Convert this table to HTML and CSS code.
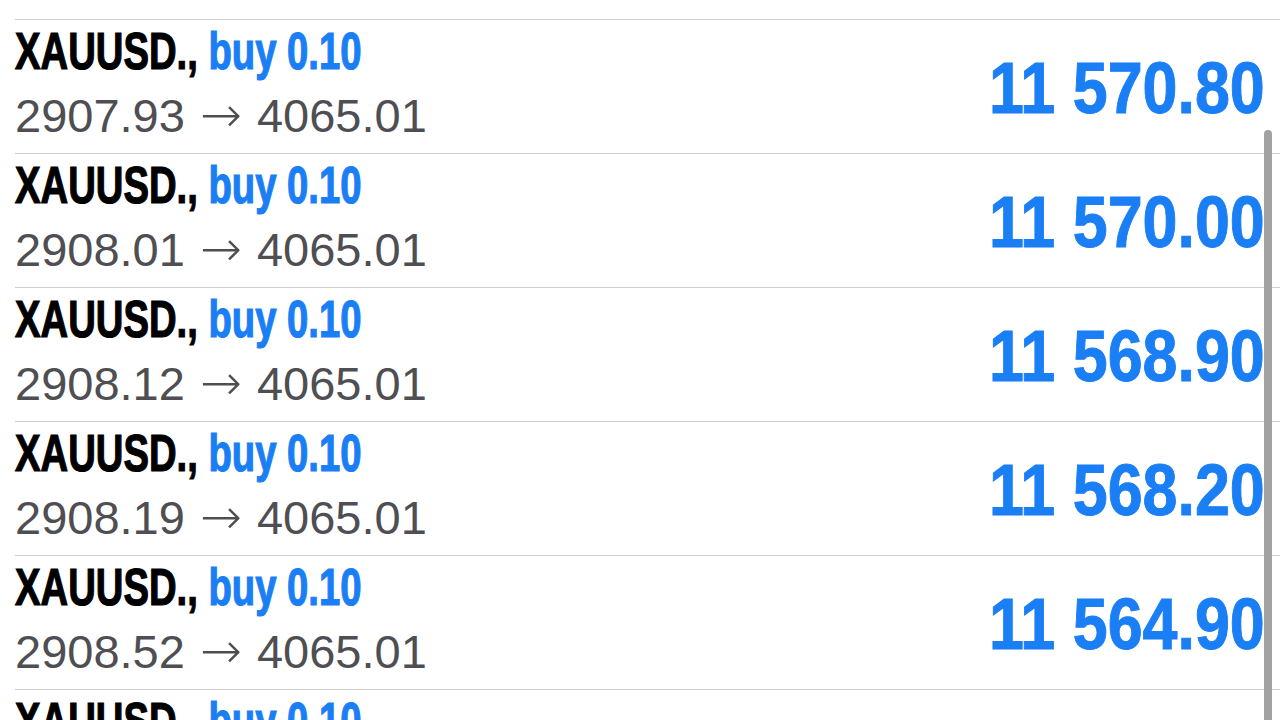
FILE: index.html
```html
<!DOCTYPE html>
<html lang="en">
<head>
    <meta charset="UTF-8">
    <meta name="viewport" content="width=device-width, initial-scale=1.0">
    <title>Trade History</title>
    <link rel="stylesheet" href="styles.css">
</head>
<body>

    <div class="deals">
        <div class="deal">
            <div class="deal-info">
                <div class="deal-title">XAUUSD., <span class="deal-type">buy 0.10</span></div>
                <div class="deal-prices">2907.84 <span class="arrow">→</span> 4065.01</div>
            </div>
            <div class="deal-profit">11 571.70</div>
        </div>
        <div class="deal">
            <div class="deal-info">
                <div class="deal-title">XAUUSD., <span class="deal-type">buy 0.10</span></div>
                <div class="deal-prices">2907.93 <span class="arrow">→</span> 4065.01</div>
            </div>
            <div class="deal-profit">11 570.80</div>
        </div>
        <div class="deal">
            <div class="deal-info">
                <div class="deal-title">XAUUSD., <span class="deal-type">buy 0.10</span></div>
                <div class="deal-prices">2908.01 <span class="arrow">→</span> 4065.01</div>
            </div>
            <div class="deal-profit">11 570.00</div>
        </div>
        <div class="deal">
            <div class="deal-info">
                <div class="deal-title">XAUUSD., <span class="deal-type">buy 0.10</span></div>
                <div class="deal-prices">2908.12 <span class="arrow">→</span> 4065.01</div>
            </div>
            <div class="deal-profit">11 568.90</div>
        </div>
        <div class="deal">
            <div class="deal-info">
                <div class="deal-title">XAUUSD., <span class="deal-type">buy 0.10</span></div>
                <div class="deal-prices">2908.19 <span class="arrow">→</span> 4065.01</div>
            </div>
            <div class="deal-profit">11 568.20</div>
        </div>
        <div class="deal">
            <div class="deal-info">
                <div class="deal-title">XAUUSD., <span class="deal-type">buy 0.10</span></div>
                <div class="deal-prices">2908.52 <span class="arrow">→</span> 4065.01</div>
            </div>
            <div class="deal-profit">11 564.90</div>
        </div>
        <div class="deal">
            <div class="deal-info">
                <div class="deal-title">XAUUSD., <span class="deal-type">buy 0.10</span></div>
                <div class="deal-prices">2908.60 <span class="arrow">→</span> 4065.01</div>
            </div>
            <div class="deal-profit">11 564.10</div>
        </div>
    </div>

    <div class="scrollbar"></div>

</body>
</html>
```

FILE: styles.css
```css
html, body {
    height: 100%;
    overflow: hidden;
}

body {
    font-family: 'Liberation Sans', Arial, sans-serif;
    margin: 0;
    background-color: #fff;
    color: #000;
}

.deals {
    margin-top: -114px;
    padding-left: 15px;
}

.deal {
    display: flex;
    justify-content: space-between;
    align-items: flex-start;
    height: 133px;
    padding-right: 15px;
    border-bottom: 1px solid #d0d0d0;
}

.deal-info {
    padding-top: 1px;
}

/* the app uses a condensed bold face, so squeeze Liberation Sans */
.deal-title {
    display: inline-block;
    font-weight: bold;
    font-size: 51px;
    line-height: 62px;
    white-space: nowrap;
    -webkit-text-stroke: 1.2px currentColor;
    transform: scaleX(0.75);
    transform-origin: left center;
}

.deal-type {
    color: #1a7ef5;
}

.deal-prices {
    font-size: 47px;
    line-height: 64px;
    color: #4e4e53;
    white-space: nowrap;
}

.arrow {
    font-family: 'DejaVu Sans', sans-serif;
    font-weight: 200;
    font-size: 50px;
    margin: 0 2px;
}

.deal-profit {
    display: inline-block;
    font-weight: bold;
    font-size: 73px;
    line-height: 80px;
    margin-top: 28px;
    color: #1a7ef5;
    white-space: nowrap;
    -webkit-text-stroke: 1px currentColor;
    transform: scaleX(0.86);
    transform-origin: right center;
}

.scrollbar {
    position: fixed;
    top: 130px;
    right: 8px;
    width: 8px;
    height: 620px;
    border-radius: 4px;
    background-color: #a2a2a2;
}
```
